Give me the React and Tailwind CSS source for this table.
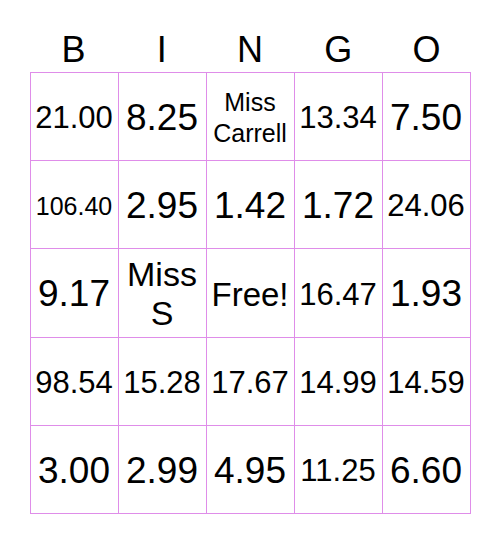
import React from "react";

const letters = ["B", "I", "N", "G", "O"];

// each cell: text, font size class, line height class
const cells = [
  ["21.00", "text-[31px]"], ["8.25", "text-[37px]"], ["Miss Carrell", "text-[25px] leading-[31px]"], ["13.34", "text-[31px]"], ["7.50", "text-[37px]"],
  ["106.40", "text-[25px]"], ["2.95", "text-[37px]"], ["1.42", "text-[37px]"], ["1.72", "text-[37px]"], ["24.06", "text-[31px]"],
  ["9.17", "text-[37px]"], ["Miss S", "text-[34px] leading-[39px]"], ["Free!", "text-[33px]"], ["16.47", "text-[31px]"], ["1.93", "text-[37px]"],
  ["98.54", "text-[31px]"], ["15.28", "text-[31px]"], ["17.67", "text-[31px]"], ["14.99", "text-[31px]"], ["14.59", "text-[31px]"],
  ["3.00", "text-[37px]"], ["2.99", "text-[37px]"], ["4.95", "text-[37px]"], ["11.25", "text-[31px]"], ["6.60", "text-[37px]"],
];

const App = () => {
  return (
    <div className="w-[500px] h-[544px] bg-white text-black font-['Liberation_Sans',Arial,sans-serif]">
      <div className="mx-auto w-[441px] h-[72px] pt-[32px] grid grid-cols-5">
        {letters.map((l) => (
          <div key={l} className="text-center text-[36px] leading-[36px]">
            {l}
          </div>
        ))}
      </div>
      <div className="mx-auto w-[441px] grid grid-cols-5 border-l border-t border-[#df8de9]">
        {cells.map(([text, size], i) => (
          <div
            key={i}
            className={`h-[88.2px] px-1 pt-[3px] flex items-center justify-center text-center border-r border-b border-[#df8de9] leading-[1.15] ${size}`}
          >
            {text}
          </div>
        ))}
      </div>
    </div>
  );
};

export default App;
